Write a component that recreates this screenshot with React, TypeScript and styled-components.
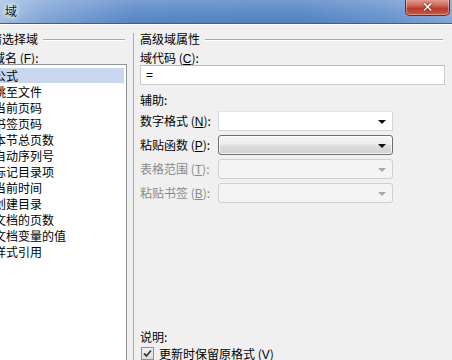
import React from "react";
import styled, { createGlobalStyle, css } from "styled-components";

const Global = createGlobalStyle`
  html, body { margin: 0; padding: 0; background: #f0f0f0; overflow: hidden; }
  body { font-family: "Noto Sans CJK SC", "Noto Sans", sans-serif; font-size: 12px; color: #000; }
`;

const Window = styled.div`
  width: 452px;
  height: 360px;
  overflow: hidden;
  display: flex;
  flex-direction: column;
  background: #f0f0f0;
`;

const TitleBar = styled.div`
  height: 23px;
  flex: 0 0 23px;
  display: flex;
  align-items: flex-start;
  background:
    linear-gradient(180deg, rgba(255,255,255,0.18) 0%, rgba(255,255,255,0.05) 50%, rgba(0,0,0,0.04) 100%),
    linear-gradient(90deg, #aac3e4 0%, #83a7d8 10%, #5b89c9 30%, #5585c6 65%, #6a95cf 85%, #86a9da 100%);
  border-bottom: 1px solid #3d5f8f;
  box-shadow: 0 1px 0 #ffffff;
  margin-bottom: 1px;
`;

const TitleText = styled.span`
  margin: 4px 0 0 5px;
  font-size: 12px;
  line-height: 14px;
  color: #111;
  text-shadow: 0 0 4px #fff, 0 0 6px #fff;
`;

const CloseButton = styled.div`
  margin-left: auto;
  margin-right: 2px;
  margin-top: -1px;
  width: 43px;
  height: 16px;
  border: 1px solid #6e2a22;
  border-top: none;
  border-radius: 0 0 5px 5px;
  background: linear-gradient(180deg, #e3a596 0%, #cf6a5a 40%, #b83a2c 60%, #c85a48 100%);
  box-shadow: inset 0 0 0 1px rgba(255,255,255,0.35);
  display: flex;
  align-items: center;
  justify-content: center;
  color: #fff;
  font-family: "DejaVu Sans", sans-serif;
  font-weight: bold;
  font-size: 14px;
  text-shadow: 0 0 2px #5a1a12, 0 0 1px #5a1a12;
`;

const Body = styled.div`
  flex: 1;
  display: flex;
  padding-top: 7px;
  min-height: 0;
`;

const LeftPane = styled.div`
  margin-left: -10px;
  width: 137px;
  flex: 0 0 137px;
  display: flex;
  flex-direction: column;
`;

const RightPane = styled.div`
  margin-left: 6px;
  flex: 1;
  border-left: 1px solid #a9a9a9;
  box-shadow: 1px 0 0 #ffffff;
  padding-left: 6px;
  padding-right: 7px;
  display: flex;
  flex-direction: column;
  margin-top: 1px;
`;

const GroupHeader = styled.div<{ $offset?: number }>`
  display: flex;
  align-items: center;
  gap: 5px;
  line-height: 14px;
  height: 14px;
  margin-top: ${(p) => p.$offset ?? 0}px;
  padding-right: 2px;
  &::after {
    content: "";
    flex: 1;
    height: 0;
    border-top: 1px solid #a9a9a9;
    border-bottom: 1px solid #ffffff;
    margin-top: 1px;
  }
`;

const Label = styled.div<{ $top?: number; $indent?: number }>`
  line-height: 12px;
  height: 12px;
  margin-top: ${(p) => p.$top ?? 0}px;
  margin-left: ${(p) => p.$indent ?? 0}px;
  white-space: nowrap;
`;

const U = styled.span`
  text-decoration: underline;
  font-family: "Liberation Sans", sans-serif;
`;

const ListBox = styled.div`
  margin-top: 0;
  flex: 1;
  background: #fff;
  border: 1px solid #8e9196;
  border-bottom: none;
  padding: 3px 2px 0 5px;
  display: flex;
  flex-direction: column;
`;

const ListItem = styled.div<{ $selected?: boolean }>`
  height: 15px;
  line-height: 15px;
  margin-bottom: 1px;
  padding-left: 0;
  text-indent: -2px;
  white-space: nowrap;
  ${(p) =>
    p.$selected &&
    css`
      background: #c8d7ee;
    `}
`;

const TextInput = styled.div`
  margin-top: 1px;
  height: 18px;
  background: #fff;
  border: 1px solid #c9cbcf;
  border-top-color: #b7babe;
  padding-left: 5px;
  line-height: 18px;
  font-family: "Liberation Sans", sans-serif;
  font-size: 12px;
`;

const FieldRow = styled.div<{ $top: number }>`
  display: flex;
  align-items: center;
  height: 20px;
  margin-top: ${(p) => p.$top}px;
`;

const RowLabel = styled.div<{ $disabled?: boolean }>`
  width: 78px;
  flex: 0 0 78px;
  white-space: nowrap;
  line-height: 12px;
  color: ${(p) => (p.$disabled ? "#8a8a8a" : "#000")};
`;

type ComboKind = "plain" | "button" | "disabled";

const Combo = styled.div<{ $kind: ComboKind }>`
  width: 175px;
  height: 20px;
  box-sizing: border-box;
  display: flex;
  align-items: center;
  justify-content: flex-end;
  padding-right: 6px;
  ${(p) =>
    p.$kind === "plain" &&
    css`
      background: #fff;
      border: 1px solid #d3d5d8;
      border-top-color: #e2e3e5;
    `}
  ${(p) =>
    p.$kind === "button" &&
    css`
      background: linear-gradient(180deg, #f6f6f6 0%, #ececec 45%, #dddddd 55%, #d2d2d2 100%);
      border: 1px solid #6e6e6e;
      border-radius: 3px;
      box-shadow: inset 0 0 0 1px rgba(255, 255, 255, 0.7);
    `}
  ${(p) =>
    p.$kind === "disabled" &&
    css`
      background: #f4f4f4;
      border: 1px solid #cfcfcf;
      border-radius: 3px;
    `}
`;

const Arrow = styled.span<{ $disabled?: boolean }>`
  width: 0;
  height: 0;
  border-left: 4px solid transparent;
  border-right: 4px solid transparent;
  border-top: 4px solid ${(p) => (p.$disabled ? "#a6a6a6" : "#111")};
  margin-top: 1px;
`;

const CheckRow = styled.div`
  display: flex;
  align-items: flex-start;
  gap: 5px;
  margin-top: 4px;
  margin-left: 1px;
`;

const CheckBox = styled.div`
  width: 11px;
  height: 11px;
  border: 1px solid #8f8f8f;
  background: linear-gradient(180deg, #f2f2f2, #dcdcdc);
  display: flex;
  align-items: center;
  justify-content: center;
`;

const CheckText = styled.span`
  line-height: 13px;
`;

const items = [
  "公式",
  "跳至文件",
  "当前页码",
  "书签页码",
  "本节总页数",
  "自动序列号",
  "标记目录项",
  "当前时间",
  "创建目录",
  "文档的页数",
  "文档变量的值",
  "样式引用",
];

function ComboField({ label, k, kind, top }: { label: string; k: string; kind: ComboKind; top: number }) {
  const disabled = kind === "disabled";
  return (
    <FieldRow $top={top}>
      <RowLabel $disabled={disabled}>
        {label} (<U>{k}</U>):
      </RowLabel>
      <Combo $kind={kind}>
        <Arrow $disabled={disabled} />
      </Combo>
    </FieldRow>
  );
}

export default function App() {
  return (
    <>
      <Global />
      <Window>
        <TitleBar>
          <TitleText>域</TitleText>
          <CloseButton>✕</CloseButton>
        </TitleBar>
        <Body>
          <LeftPane>
            <GroupHeader>请选择域</GroupHeader>
            <Label $top={6} $indent={3}>
              域名 (<U>F</U>):
            </Label>
            <ListBox>
              {items.map((t, i) => (
                <ListItem key={t} $selected={i === 0}>
                  {t}
                </ListItem>
              ))}
            </ListBox>
          </LeftPane>
          <RightPane>
            <GroupHeader $offset={-1}>高级域属性</GroupHeader>
            <Label $top={6}>
              域代码 (<U>C</U>):
            </Label>
            <TextInput>=</TextInput>
            <Label $top={9}>辅助:</Label>
            <ComboField label="数字格式" k="N" kind="plain" top={5} />
            <ComboField label="粘贴函数" k="P" kind="button" top={4} />
            <ComboField label="表格范围" k="T" kind="disabled" top={4} />
            <ComboField label="粘贴书签" k="B" kind="disabled" top={4} />
            <Label $top={128}>说明:</Label>
            <CheckRow>
              <CheckBox>
                <svg width="9" height="9" viewBox="0 0 9 9">
                  <path d="M1 4.5 L3.5 7 L8 1.5" fill="none" stroke="#3a3a3a" strokeWidth="1.8" />
                </svg>
              </CheckBox>
              <CheckText>
                更新时保留原格式 (<U>V</U>)
              </CheckText>
            </CheckRow>
          </RightPane>
        </Body>
      </Window>
    </>
  );
}
